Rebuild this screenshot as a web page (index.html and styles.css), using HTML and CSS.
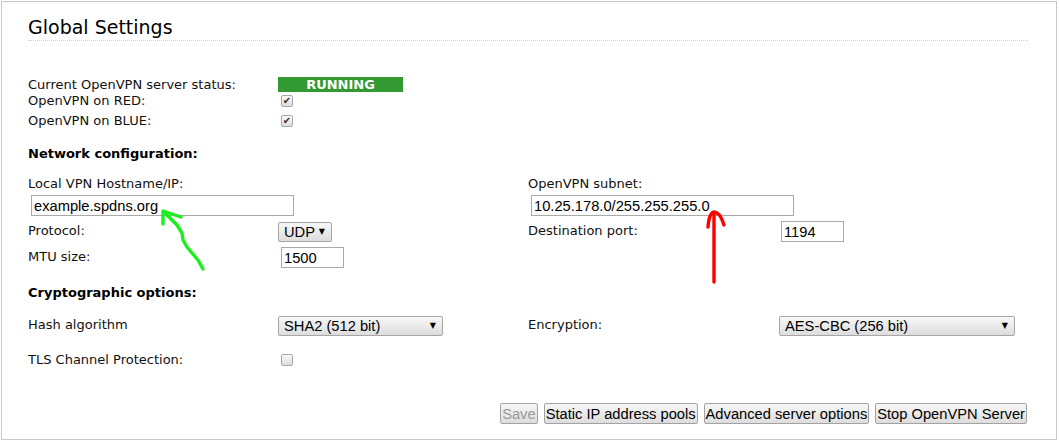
FILE: index.html
```html
<!DOCTYPE html>
<html lang="en">
<head>
<meta charset="UTF-8">
<title>OpenVPN - Global Settings</title>
<link rel="stylesheet" href="styles.css">
</head>
<body>
<div class="panel">
    <h2 class="title">Global Settings</h2>

    <div class="row status-row">
        <span>Current OpenVPN server status:</span>
        <div class="status">RUNNING</div>
    </div>
    <div class="row row-red">
        <span>OpenVPN on RED:</span>
        <span class="check checked"></span>
    </div>
    <div class="row row-blue">
        <span>OpenVPN on BLUE:</span>
        <span class="check checked"></span>
    </div>

    <div class="row heading">Network configuration:</div>
    <div class="row row-sub">
        <span class="span2">Local VPN Hostname/IP:</span>
        <span class="span2">OpenVPN subnet:</span>
    </div>
    <div class="row field-row tight">
        <div class="span2"><input class="text wide" value="example.spdns.org"></div>
        <div class="span2"><input class="text wide" value="10.25.178.0/255.255.255.0"></div>
    </div>
    <div class="row field-row">
        <span class="lbl">Protocol:</span>
        <div><div class="select udp"><span>UDP</span><span class="arrow">▼</span></div></div>
        <span class="lbl">Destination port:</span>
        <div><input class="text short" value="1194"></div>
    </div>
    <div class="row field-row">
        <span class="lbl">MTU size:</span>
        <div><input class="text short mtu" value="1500"></div>
    </div>

    <div class="row heading">Cryptographic options:</div>
    <div class="row field-row row-hash">
        <span class="lbl">Hash algorithm</span>
        <div><div class="select hash"><span>SHA2 (512 bit)</span><span class="arrow">▼</span></div></div>
        <span class="lbl">Encryption:</span>
        <div><div class="select cipher"><span>AES-CBC (256 bit)</span><span class="arrow">▼</span></div></div>
    </div>
    <div class="row row-tls">
        <span>TLS Channel Protection:</span>
        <span class="check"></span>
    </div>

    <div class="actions">
        <button disabled>Save</button>
        <button>Static IP address pools</button>
        <button>Advanced server options</button>
        <button>Stop OpenVPN Server</button>
    </div>
</div>

<!-- hand drawn marks on top of the screenshot -->
<svg class="marks" width="1059" height="441" viewBox="0 0 1059 441">
    <g fill="none" stroke-width="3.4" stroke-linecap="round" stroke-linejoin="round">
        <path stroke="#1cf01c" d="M163 224 L163 211 L181 217"/>
        <path stroke="#1cf01c" d="M164 212 L170 218 L177 225 L182 233 L183 240 L187 247 L192 253 L198 260 L203 269"/>
        <path stroke="#ff0000" d="M708 227 Q709 213 714 212 Q720 212 724 225"/>
        <path stroke="#ff0000" d="M714 213 L714 282"/>
    </g>
</svg>
</body>
</html>
```

FILE: styles.css
```css
body {
    margin: 0;
    background-color: white;
    font-family: "DejaVu Sans", Verdana, sans-serif;
    font-size: 13px;
    color: #111;
}

.panel {
    position: relative;
    box-sizing: border-box;
    width: 1056px;
    height: 439px;
    margin: 1px 0 0 1px;
    padding: 13px 26px 0;
    border: 1px solid #c8c8c8;
}

.title {
    width: 1000px;
    margin: 0;
    padding-bottom: 1px;
    font-size: 19px;
    font-weight: normal;
    line-height: 24px;
    color: #000;
    border-bottom: 1px dotted #cfcfcf;
}

.row {
    display: grid;
    grid-template-columns: repeat(4, 250px);
    align-items: center;
    height: 16px;
    line-height: 16px;
    white-space: nowrap;
}

.span2 {
    grid-column: span 2;
}

.status-row {
    margin-top: 36px;
    height: 15px;
    line-height: 15px;
}

.row-red { margin-top: 1px; }
.row-blue { margin-top: 4px; }

.heading {
    margin-top: 17px;
    font-weight: bold;
    color: #000;
}

.row-sub { margin-top: 14px; }

.field-row {
    margin-top: 5px;
    height: 21px;
}

.field-row .lbl {
    margin-top: -2px;
}

.field-row.tight { margin-top: 3px; }
.row-hash { margin-top: 14px; }
.row-tls { margin-top: 16px; }

.status {
    width: 125px;
    height: 15px;
    background-color: #339933;
    color: white;
    font-weight: bold;
    text-align: center;
}

.check {
    box-sizing: border-box;
    width: 12px;
    height: 12px;
    margin-left: 3px;
    border: 1px solid #a8a8a8;
    border-radius: 2px;
    background: linear-gradient(#fafafa, #dcdcdc);
    font-size: 10px;
    line-height: 10px;
    text-align: center;
    color: #333;
}

.check.checked::after {
    content: "✔";
}

.text {
    box-sizing: border-box;
    display: block;
    height: 21px;
    margin: 0 0 0 3px;
    padding: 0 2px;
    border: 1px solid #a9a9a9;
    font-family: "Liberation Sans", Arial, sans-serif;
    font-size: 14.7px;
    color: #000;
    background: white;
}

.text.wide { width: 263px; }
.text.short { width: 63px; }

.select {
    box-sizing: border-box;
    display: flex;
    justify-content: space-between;
    align-items: center;
    height: 20px;
    padding: 0 6px 0 5px;
    border: 1px solid #a6a6a6;
    border-radius: 2px;
    background: linear-gradient(#f8f8f8, #dddddd);
    font-family: "Liberation Sans", Arial, sans-serif;
    font-size: 14.7px;
    color: #000;
}

.select .arrow {
    font-family: "DejaVu Sans", sans-serif;
    font-size: 8px;
}

.select.udp { width: 54px; }
.select.hash { width: 165px; }
.select.cipher { width: 236px; margin-left: 1px; }

.actions {
    display: flex;
    justify-content: flex-end;
    gap: 6px;
    width: 999px;
    margin-top: 35px;
}

button {
    height: 21px;
    padding: 0 1px;
    border: 1px solid #a2a2a2;
    border-radius: 2px;
    background: linear-gradient(#f7f7f7, #dddddd);
    font-family: "Liberation Sans", Arial, sans-serif;
    font-size: 14.7px;
    color: #000;
}

button:disabled {
    color: #9a9a9a;
}

.marks {
    position: absolute;
    left: 0;
    top: 0;
    pointer-events: none;
}
```
